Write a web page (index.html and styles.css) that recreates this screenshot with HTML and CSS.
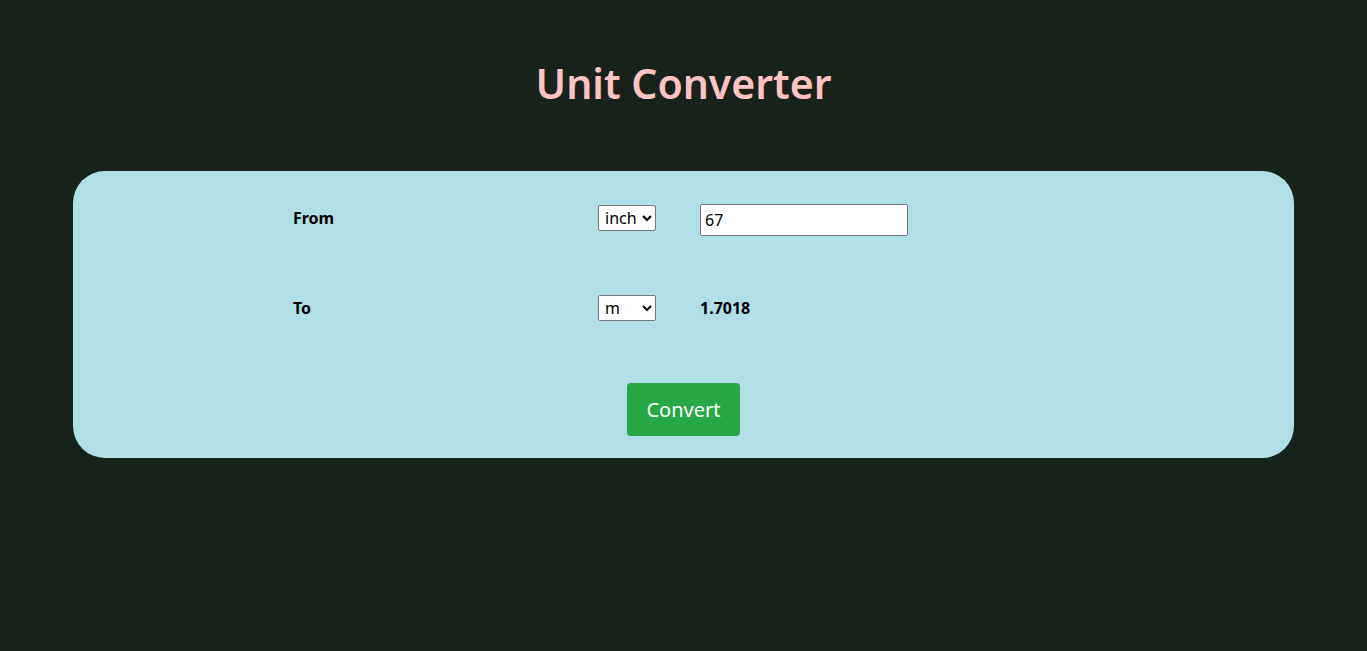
FILE: index.html
```html
<!DOCTYPE html>
<html>
<head>
<meta charset="utf-8">
<title>Unit Converter</title>
<link rel="stylesheet" href="styles.css">
</head>
<body>
<h1 class="title">Unit Converter</h1>
<div class="card">
  <div class="grid">
    <div class="row">
      <label class="label">From</label>
      <select class="unit">
        <option selected>inch</option>
        <option>m</option>
        <option>cm</option>
        <option>mm</option>
        <option>km</option>
        <option>ft</option>
      </select>
      <input class="value" type="text" value="67">
    </div>
    <div class="row">
      <label class="label">To</label>
      <select class="unit">
        <option selected>m</option>
        <option>inch</option>
        <option>cm</option>
        <option>mm</option>
        <option>km</option>
        <option>ft</option>
      </select>
      <span class="result">1.7018</span>
    </div>
  </div>
  <div class="actions">
    <button class="btn">Convert</button>
  </div>
</div>
</body>
</html>
```

FILE: styles.css
```css
html, body {
  margin: 0;
  padding: 0;
}
body {
  background: #17221a;
  font-family: "Noto Sans", "Open Sans", sans-serif;
  padding: 0 73px;
}
.title {
  margin: 0;
  padding-top: 55px;
  height: 171px;
  box-sizing: border-box;
  text-align: center;
  color: #ffc3c3;
  font-size: 41px;
  font-weight: 600;
  line-height: 56px;
}
.card {
  background: #b0dfe5;
  border-radius: 32px;
  padding: 27px 0 22px;
}
.grid {
  width: 781px;
  margin: 0 auto;
  display: flex;
  flex-direction: column;
  gap: 50px;
}
.row {
  display: grid;
  grid-template-columns: 305px 102px 1fr;
  align-items: center;
  height: 40px;
}
.label {
  font-weight: 700;
  font-size: 16px;
  color: #000;
}
.unit {
  width: 58px;
  height: 26px;
  font-size: 16px;
  font-family: "Noto Sans", sans-serif;
  border: 1px solid #767676;
  border-radius: 2px;
  background: #fff;
  padding: 0 2px;
}
.value {
  width: 208px;
  height: 32px;
  margin-top: 4px;
  box-sizing: border-box;
  font-size: 16px;
  font-family: "Noto Sans", sans-serif;
  border: 1px solid #767676;
  border-radius: 2px;
  padding: 0 4px;
}
.result {
  font-weight: 700;
  font-size: 16px;
}
.actions {
  display: flex;
  justify-content: center;
  margin-top: 55px;
}
.btn {
  width: 113px;
  height: 53px;
  background: #28a745;
  color: #fff;
  border: none;
  border-radius: 4px;
  font-size: 20px;
  font-family: "Noto Sans", sans-serif;
}
```
